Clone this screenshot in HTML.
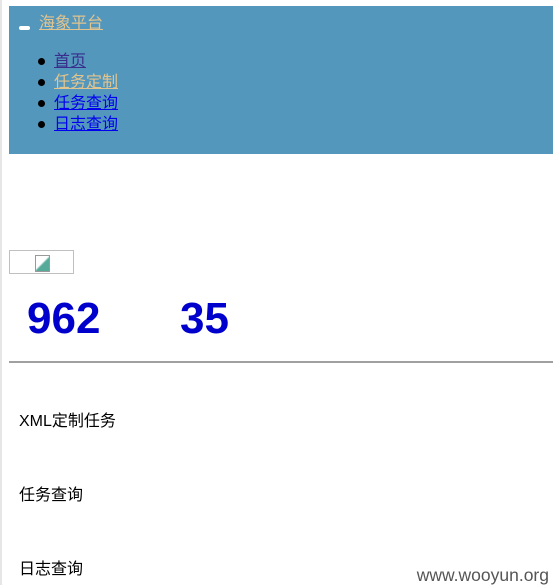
<!DOCTYPE html>
<html><head><meta charset="utf-8"><style>
body{margin:0;width:553px;height:585px;overflow:hidden;background:#fff;position:relative;font-family:"Liberation Sans","Noto Sans CJK SC",sans-serif;font-size:16px}
.lb{position:absolute;left:0;top:0;width:2px;height:585px;background:#e6e6e6}
.nav{position:absolute;left:9px;top:6px;width:544px;height:148px;background:#5497bd}
.t{position:absolute;left:30px;top:3px;color:#e2c48e;text-decoration:underline}
.dash{position:absolute;left:10px;top:20px;width:11px;height:4px;background:#fff;border-radius:2px}
ul{position:absolute;left:0;top:45px;margin:0;padding:0 0 0 45px;list-style:none}
li{height:21px;line-height:21px;position:relative}
li:before{content:"";position:absolute;left:-16px;top:7px;width:7px;height:7px;border-radius:50%;background:#000}
a{text-decoration:underline}
.a1{color:#3a2d8c}.a2{color:#e2c48e}.a3{color:#0000ee}
.img{position:absolute;left:9px;top:250px;width:63px;height:22px;border:1px solid #c0c0c0}
.img i{position:absolute;left:25px;top:4px;width:13px;height:15px;background:linear-gradient(135deg,#fff 45%,#5a9 55%);border:1px solid #999}
.n{position:absolute;top:294px;font-size:44px;font-weight:bold;color:#0000cc}
hr{position:absolute;left:9px;top:361px;width:544px;margin:0;border:0;border-top:2px solid #a0a0a0}
.s{position:absolute;left:19px;color:#000}
.w{position:absolute;right:4px;top:565px;color:#555;font-size:17.5px}
</style></head><body>
<div class="lb"></div>
<div class="nav"><div class="dash"></div><span class="t">海象平台</span>
<ul><li><a class="a1"> 首页</a></li><li><a class="a2">任务定制</a></li><li><a class="a3">任务查询</a></li><li><a class="a3">日志查询</a></li></ul></div>
<div class="img"><i></i></div>
<div class="n" style="left:27px">962</div>
<div class="n" style="left:180px">35</div>
<hr>
<div class="s" style="top:407px">XML定制任务</div>
<div class="s" style="top:481px">任务查询</div>
<div class="s" style="top:555px">日志查询</div>
<div class="w">www.wooyun.org</div>
</body></html>
